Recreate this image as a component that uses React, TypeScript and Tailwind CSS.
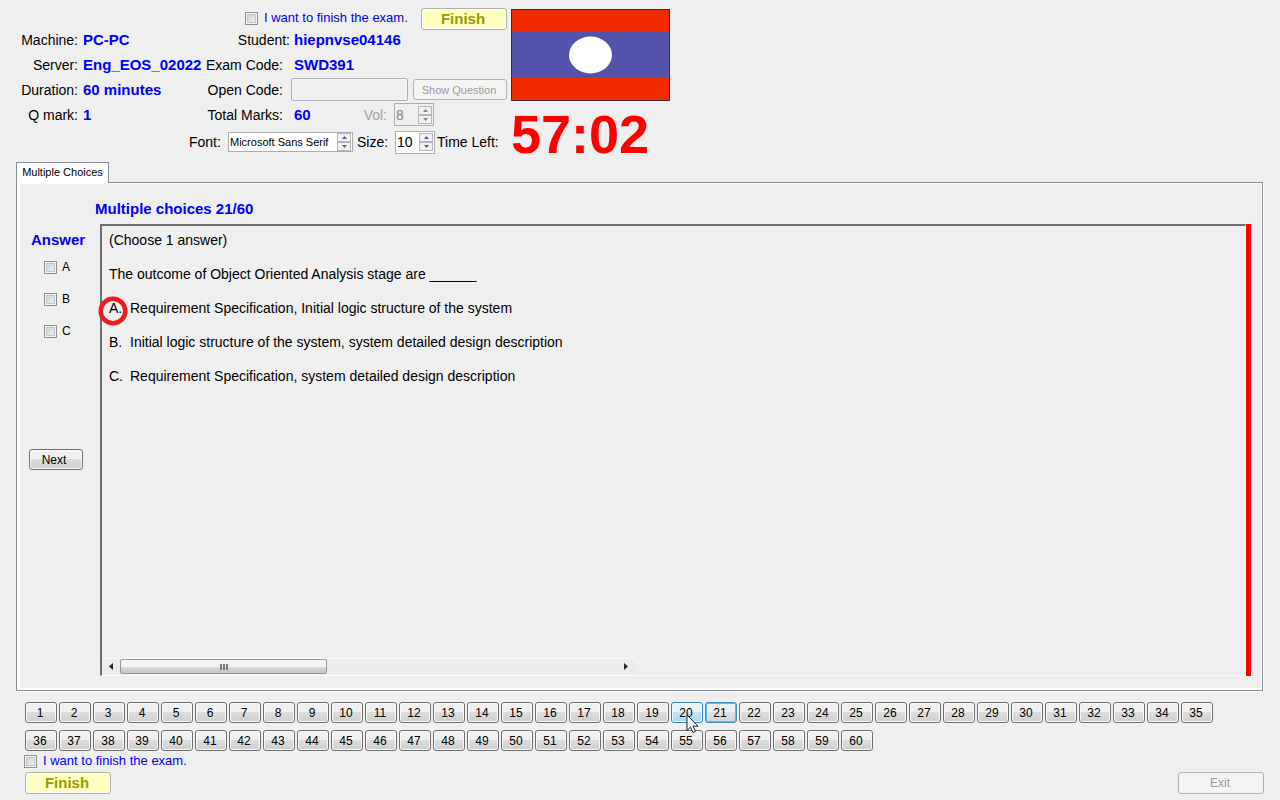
import React from "react";

const details = [
  ["Machine:", "PC-PC"],
  ["Server:", "Eng_EOS_02022"],
  ["Duration:", "60 minutes"],
  ["Q mark:", "1"],
];

const answers = ["A", "B", "C"];

const options = [
  ["A.", "Requirement Specification, Initial logic structure of the system"],
  ["B.", "Initial logic structure of the system, system detailed design description"],
  ["C.", "Requirement Specification, system detailed design description"],
];

const questions = Array.from({ length: 60 }, (_, i) => i + 1);
const current = 21;
const hovered = 20;

const checkboxClass =
  "size-[13px] shrink-0 appearance-none border border-[#8e8f8f] bg-linear-to-br from-[#c4c8ce] to-[#f8f8f8] shadow-[inset_0_0_0_1px_#f4f4f4,inset_0_0_0_2px_#c2c5c9] checked:bg-[#4b6fa5]";

function FinishToggle({ id }: { id: string }) {
  return (
    <div className="flex items-center gap-[6px]">
      <input id={id} type="checkbox" className={checkboxClass} />
      <label htmlFor={id} className="text-[13px] leading-4 whitespace-nowrap text-[#0000f0]">
        I want to finish the exam.
      </label>
    </div>
  );
}

function FinishButton() {
  return (
    <button
      type="button"
      disabled
      className="h-[22px] w-[86px] shrink-0 rounded-[3px] border border-[#adb2b5] bg-[#ffffc0] pr-[2px] text-[15px] leading-5 font-bold text-[#9a9a00] shadow-[inset_0_0_0_1px_#fcfcfc]"
    >
      Finish
    </button>
  );
}

function Spinner({
  id,
  value,
  disabled,
  box,
  text,
}: {
  id: string;
  value: string;
  disabled?: boolean;
  box: string;
  text: string;
}) {
  const fill = disabled ? "#838383" : "#4a5fa8";
  return (
    <div className={`flex items-center border border-[#abadb3] pr-px ${box}`}>
      <input
        id={id}
        type="text"
        defaultValue={value}
        disabled={disabled}
        className={`w-full min-w-0 flex-1 bg-transparent pl-px outline-none ${text}`}
      />
      <div className="flex shrink-0 flex-col">
        {["Increase", "Decrease"].map((name) => (
          <button
            key={name}
            type="button"
            aria-label={name}
            disabled={disabled}
            className="flex h-[9px] w-[14px] items-center justify-center border border-[#b5b6ba] bg-[#f1f1f1]"
          >
            <svg width="5" height="3" viewBox="0 0 5 3">
              <path d={name === "Increase" ? "M0 3 2.5 0 5 3Z" : "M0 0 2.5 3 5 0Z"} fill={fill} />
            </svg>
          </button>
        ))}
      </div>
    </div>
  );
}

function Flag() {
  return (
    <svg width="159" height="92" viewBox="0 0 159 92" role="img" aria-label="Flag">
      <rect width="159" height="92" fill="#f02b00" />
      <rect y="23" width="159" height="46" fill="#5453ab" />
      <ellipse cx="79.500" cy="46" rx="21.500" ry="18.500" fill="#fff" />
      <rect x=".5" y=".5" width="158" height="91" fill="none" stroke="#4a2438" />
    </svg>
  );
}

function Pointer() {
  return (
    <svg
      className="pointer-events-none absolute top-[11px] left-[14px] z-10"
      width="14"
      height="21"
      viewBox="0 0 14 21"
    >
      <path
        d="M1 1V16.500L4.500 13.200L7 18.500L9.500 17.300L7 12.200H12Z"
        fill="#fff"
        stroke="#1b1b38"
        strokeWidth="1"
      />
    </svg>
  );
}

function Header() {
  return (
    <header className="flex items-start gap-1 pt-2 pl-4">
      <div>
        <div className="flex">
          <dl className="w-[189px] pt-[19px]">
            {details.map(([label, value]) => (
              <div key={label} className="flex h-[25px] items-center">
                <dt className="w-[62px] shrink-0 text-right">{label}</dt>
                <dd className="pl-[5px] text-[15px] font-bold whitespace-nowrap text-[#0000ff]">
                  {value}
                </dd>
              </div>
            ))}
          </dl>
          <div className="w-[302px]">
            <div className="flex h-[19px] items-start justify-between pl-10">
              <div className="pt-[2px]">
                <FinishToggle id="finish-top" />
              </div>
              <FinishButton />
            </div>
            <div className="flex h-[25px] items-center gap-1">
              <span className="w-[85px] text-right">Student:</span>
              <b className="text-[15px] text-[#0000ff]">hiepnvse04146</b>
            </div>
            <div className="flex h-[25px] items-center gap-[11px]">
              <span className="w-[78px] text-right whitespace-nowrap">Exam Code:</span>
              <b className="text-[15px] text-[#0000ff]">SWD391</b>
            </div>
            <div className="flex h-[25px] items-center">
              <label htmlFor="open-code" className="w-[78px] text-right whitespace-nowrap">
                Open Code:
              </label>
              <input
                id="open-code"
                type="text"
                disabled
                className="ml-2 h-[23px] w-[117px] rounded-[2px] border border-[#afafb1] bg-[#efefef] px-1 shadow-[inset_0_0_0_1px_#f6f6f6]"
              />
              <button
                type="button"
                disabled
                className="ml-auto h-[21px] w-[94px] rounded-[3px] border border-[#adb2b5] bg-[#f4f4f4] pr-[2px] text-[11px] text-[#9b9b9b]"
              >
                Show Question
              </button>
            </div>
            <div className="flex h-[25px] items-center">
              <span className="w-[78px] text-right whitespace-nowrap">Total Marks:</span>
              <b className="w-[69px] pl-[11px] text-[15px] text-[#0000ff]">60</b>
              <label htmlFor="volume" className="w-[35px] text-right text-[#a0a0a0]">
                Vol:
              </label>
              <div className="pl-[7px]">
                <Spinner
                  id="volume"
                  value="8"
                  disabled
                  box="h-[23px] w-10 bg-[#efefef]"
                  text="text-[14px] text-[#838383]"
                />
              </div>
            </div>
          </div>
        </div>
        <div className="flex h-[30px] items-center pl-[173px]">
          <label htmlFor="font" className="w-[39px]">
            Font:
          </label>
          <Spinner
            id="font"
            value="Microsoft Sans Serif"
            box="h-5 w-[125px] bg-white"
            text="text-[11px]"
          />
          <label htmlFor="size" className="w-[42px] pl-1">
            Size:
          </label>
          <Spinner id="size" value="10" box="h-[23px] w-10 bg-white" text="text-[14px]" />
          <span className="pl-[2px] whitespace-nowrap">Time Left:</span>
        </div>
      </div>
      <div className="pt-px">
        <Flag />
        <div className="pt-2 text-[54px] leading-[50px] font-bold text-[#ff0000]">57:02</div>
      </div>
    </header>
  );
}

function ScrollBar() {
  return (
    <div className="mb-px flex h-4 w-[533px] max-w-full items-center border-t border-[#f8f8f8] bg-[#ececec]">
      <button type="button" aria-label="Scroll left" className="flex w-[18px] justify-center">
        <svg width="4" height="7" viewBox="0 0 4 7">
          <path d="M4 0V7L0 3.500Z" fill="#222" />
        </svg>
      </button>
      <div className="flex h-[15px] w-[207px] items-center justify-center gap-px rounded-[2px] border border-[#979797] bg-linear-to-b from-[#f3f3f3] from-50% via-[#dcdcdc] via-50% to-[#c6c6c6]">
        <i className="h-[6px] w-[2px] bg-[#777777]" />
        <i className="h-[6px] w-[2px] bg-[#777777]" />
        <i className="h-[6px] w-[2px] bg-[#777777]" />
      </div>
      <button type="button" aria-label="Scroll right" className="ml-auto flex w-[18px] justify-center">
        <svg width="4" height="7" viewBox="0 0 4 7">
          <path d="M0 0V7L4 3.500Z" fill="#222" />
        </svg>
      </button>
    </div>
  );
}

function QuestionPanel() {
  return (
    <main className="flex flex-1 flex-col border border-[#898c95] pt-4 pr-[11px] pb-[14px] pl-3 shadow-[inset_3px_0_0_#fff,inset_-1px_-2px_0_#fff,inset_0_1px_0_#fff,1px_1px_0_#fff]">
      <h1 className="pl-[66px] text-[15px] leading-5 font-bold text-[#0000ff]">
        Multiple choices 21/60
      </h1>
      <div className="mt-[5px] flex flex-1">
        <div className="w-[71px] shrink-0 pt-[6px]">
          <h2 className="pl-[2px] text-[15px] leading-5 font-bold text-[#0000ff]">Answer</h2>
          <div className="flex flex-col gap-4 pt-[9px] pl-[15px]">
            {answers.map((name) => (
              <label key={name} className="flex h-4 items-center gap-[5px] text-[12px]">
                <input type="checkbox" className={checkboxClass} />
                {name}
              </label>
            ))}
          </div>
          <button
            type="button"
            className="mt-[110px] h-[21px] w-[54px] rounded-[3px] border border-[#707070] bg-linear-to-b from-[#f0f0f0] from-50% via-[#dddddd] via-50% to-[#cfcfcf] pr-1 text-[12px] leading-4 shadow-[inset_0_0_0_1px_#f8f8f8]"
          >
            Next
          </button>
        </div>
        <section className="flex min-w-0 flex-1 flex-col border-t-2 border-r border-b border-l-2 border-t-[#6f6f6f] border-r-[#fafafa] border-b-[#fafafa] border-l-[#6f6f6f]">
          <div className="flex flex-1 flex-col gap-[17px] pt-[6px] pl-[7px] text-[14px] leading-[17px]">
            <p>(Choose 1 answer)</p>
            <p>The outcome of Object Oriented Analysis stage are ______</p>
            {options.map(([letter, text]) => (
              <p key={letter} className="relative flex">
                <span className="w-[21px] shrink-0">{letter}</span>
                <span>{text}</span>
                {letter === "A." && (
                  <svg
                    className="absolute -top-[4px] -left-[11px]"
                    width="30"
                    height="30"
                    viewBox="0 0 30 30"
                  >
                    <circle cx="15" cy="15" r="12.300" fill="none" stroke="#ed1c24" strokeWidth="4.500" />
                  </svg>
                )}
              </p>
            ))}
          </div>
          <ScrollBar />
        </section>
        <div className="w-[5px] shrink-0 bg-[#ff0000]" />
      </div>
    </main>
  );
}

function QuestionButton({ n }: { n: number }) {
  const look =
    n === hovered
      ? "border-[#3c7fb1] from-[#e8f5fc] via-[#c4e5f8] to-[#a5d8f4] shadow-[inset_0_0_0_1px_#f2fafe]"
      : n === current
        ? "border-[#3c8fb8] from-[#f0f0f0] via-[#dfe2e4] to-[#d0d4d6] shadow-[inset_0_0_0_1px_#48c8f0]"
        : "border-[#707070] from-[#f0f0f0] via-[#dddddd] to-[#cfcfcf] shadow-[inset_0_0_0_1px_#f8f8f8]";
  return (
    <button
      type="button"
      className={`relative h-[21px] w-8 rounded-[3px] border bg-linear-to-b from-50% via-50% pr-[2px] text-[12px] leading-4 ${look}`}
    >
      {n}
      {n === hovered && <Pointer />}
    </button>
  );
}

export default function App() {
  return (
    <div className="flex min-h-screen flex-col bg-[#efefef] pb-[6px] font-['Liberation_Sans',Arial,sans-serif] text-[14px] leading-5 text-black">
      <Header />
      <div className="flex flex-1 flex-col pt-[3px] pr-[17px] pl-4">
        <div role="tablist" className="flex">
          <button
            type="button"
            role="tab"
            aria-selected="true"
            className="z-10 -mb-px h-[21px] w-[93px] border border-b-0 border-[#898c95] bg-white pb-[2px] text-[11px] leading-4"
          >
            Multiple Choices
          </button>
        </div>
        <QuestionPanel />
      </div>
      <nav className="mt-[11px] flex flex-wrap gap-x-[2px] gap-y-[7px] pr-12 pl-[25px]">
        {questions.map((n) => (
          <QuestionButton key={n} n={n} />
        ))}
      </nav>
      <footer className="flex items-end justify-between pt-[2px] pr-4 pl-6">
        <div className="flex flex-col gap-[3px]">
          <FinishToggle id="finish-bottom" />
          <div className="pl-px">
            <FinishButton />
          </div>
        </div>
        <button
          type="button"
          disabled
          className="h-[22px] w-[86px] rounded-[3px] border border-[#adb2b5] bg-[#f4f4f4] pr-[2px] text-[12px] leading-4 text-[#9b9b9b]"
        >
          Exit
        </button>
      </footer>
    </div>
  );
}
